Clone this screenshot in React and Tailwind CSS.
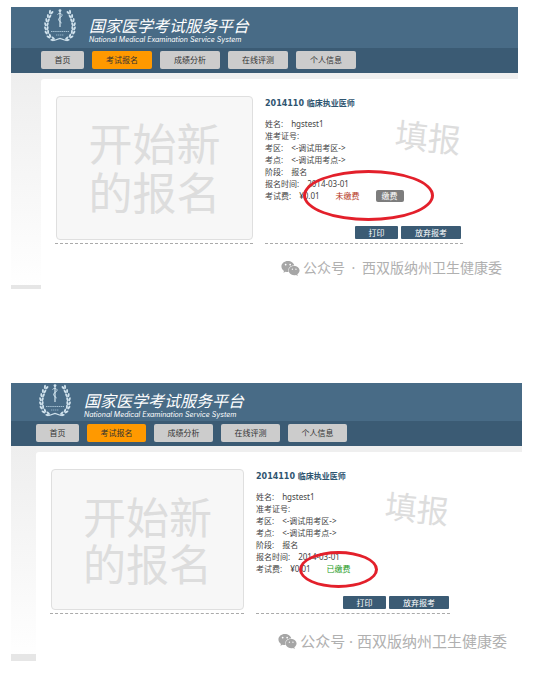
import React from 'react';
import clsx from 'clsx';
import { FaWeixin } from 'react-icons/fa';

const NAV_ITEMS = ['首页', '考试报名', '成绩分析', '在线评测', '个人信息'];

const DETAILS = [
    { label: '姓名:', value: 'hgstest1' },
    { label: '准考证号:', value: '' },
    { label: '考区:', value: '<-调试用考区->' },
    { label: '考点:', value: '<-调试用考点->' },
    { label: '阶段:', value: '报名' },
    { label: '报名时间:', value: '2014-03-01' },
];

// leaf positions on the right half of the wreath, mirrored for the left
const LEAVES = [
    [25, 3, -25],
    [27, 7, -18],
    [28.5, 11, -10],
    [29.5, 15, 0],
    [29.5, 19, 8],
    [29, 23, 20],
    [27, 27, 40],
    [23.5, 30, 65],
];

const Branch = () => (
    <g>
        {LEAVES.map(([x, y, angle]) => (
            <g key={y} transform={`translate(${x} ${y}) rotate(${angle})`}>
                <ellipse cx="-1.1" cy="0" rx="1" ry="2.1" transform="rotate(-18)" />
                <ellipse cx="1.1" cy="0" rx="1" ry="2.1" transform="rotate(18)" />
            </g>
        ))}
    </g>
);

const Emblem = () => (
    <svg viewBox="0 0 32 33" className="h-[33px] w-8 shrink-0" fill="#cfe1ec" aria-hidden="true">
        <Branch />
        <g transform="translate(32 0) scale(-1 1)">
            <Branch />
        </g>
        <path d="M10 31.5L16 29.5L22 31.5" fill="none" stroke="#cfe1ec" strokeWidth="1.2" />
        {/* staff with snake */}
        <circle cx="16" cy="1.6" r="1.4" />
        <path d="M16 2V18" stroke="#d5e6f0" strokeWidth="1.2" />
        <path
            d="M13.5 5.5C15 3.5 18.5 4.5 18 6.5C17.5 8.5 14.5 8.5 14.5 10.5C14.5 12.5 17.5 12.5 17.3 14.3"
            fill="none"
            stroke="#d5e6f0"
            strokeWidth=".9"
        />
        <path d="M7 22.5H25" stroke="#a3bed0" strokeWidth="1.2" strokeDasharray="1.5 .6" />
        <path d="M12 26H20" stroke="#8fafc4" strokeWidth="1" strokeDasharray="1.3 .6" />
    </svg>
);

/**
 * One view of the registration platform.
 * Props:
 *   paid    — fee has been paid, hides the pay button
 *   compact — slightly tighter layout
 */
const ExamScreen = ({ paid, compact }) => {
    return (
        <section className={compact ? 'mr-[11px]' : 'mr-[15px]'}>
            <header
                className={clsx(
                    'flex items-start gap-[13px] bg-[#486b86]',
                    compact ? 'h-[38px] pl-7 pt-px' : 'h-[41px] pl-[33px] pt-[2px]'
                )}
            >
                <Emblem />
                <div className="pt-[6px] italic text-white">
                    <h1 className="whitespace-nowrap text-[16px] leading-[22px]">国家医学考试服务平台</h1>
                    <p className="whitespace-nowrap font-['Inter',sans-serif] text-[7px] leading-[5px]">
                        National Medical Examination Service System
                    </p>
                </div>
            </header>

            <nav
                className={clsx(
                    'flex h-[25px] items-start gap-2 bg-[#3b5b74] pt-[3px]',
                    compact ? 'pl-[25px]' : 'pl-[30px]'
                )}
            >
                {NAV_ITEMS.map((item, i) => (
                    <button
                        key={item}
                        type="button"
                        className={clsx(
                            'h-[18px] rounded-[2px] text-[8px] leading-[18px] text-[#333]',
                            i === 0 ? 'w-[43px]' : compact ? 'w-[59px]' : 'w-[60px]',
                            i === 1 ? 'bg-[#ff9900]' : 'bg-[#cccccc]'
                        )}
                    >
                        {item}
                    </button>
                ))}
            </nav>

            <div className="flex">
                <aside
                    className={clsx(
                        'flex shrink-0 flex-col bg-linear-to-b from-[#eeeeee] to-white',
                        compact ? 'w-[25px]' : 'w-[30px]'
                    )}
                >
                    <div className={clsx('mt-auto bg-[#e6e6e6]', compact ? 'h-[7px]' : 'h-1')} />
                </aside>

                <div className="min-w-0 grow bg-[#efefef] pt-[6px]">
                    <div
                        className={clsx(
                            'rounded-tl-[3px] bg-white pl-[14px] pt-[17px]',
                            compact ? 'pb-[10px]' : 'pb-[11px]'
                        )}
                    >
                        <div className="flex gap-3">
                            <div
                                className={clsx(
                                    'shrink-0 border-b border-dashed border-[#aaa] pb-[3px]',
                                    compact ? 'w-[194px]' : 'w-[198px]'
                                )}
                            >
                                <button
                                    type="button"
                                    className={clsx(
                                        'ml-px block rounded-[4px] border border-[#dfdfdf] bg-[#f7f7f7] pt-[2px] text-[#dddddd]',
                                        compact
                                            ? 'h-[141px] w-[193px] text-[43px] leading-[47px]'
                                            : 'h-[144px] w-[197px] text-[44px] leading-[49px]'
                                    )}
                                >
                                    开始新
                                    <br />
                                    的报名
                                </button>
                            </div>

                            <div
                                className={clsx(
                                    'relative flex shrink-0 flex-col border-b border-dashed border-[#aaa] pb-1 pt-[2px] text-[8px] leading-[12px] text-[#444]',
                                    compact ? 'w-[194px]' : 'w-[198px]'
                                )}
                            >
                                <h2 className="mb-2 font-['DejaVu_Sans','Noto_Sans_CJK_SC',sans-serif] font-bold text-[#2f5570]">
                                    2014110 临床执业医师
                                </h2>
                                <dl>
                                    {DETAILS.map(({ label, value }) => (
                                        <div key={label} className="flex gap-2">
                                            <dt>{label}</dt>
                                            <dd>{value}</dd>
                                        </div>
                                    ))}
                                    <div className="relative flex gap-2">
                                        <dt>考试费:</dt>
                                        <dd className="flex items-center gap-4">
                                            <span>¥0.01</span>
                                            {paid ? (
                                                <span className="text-[#1c9a1c]">已缴费</span>
                                            ) : (
                                                <>
                                                    <span className="text-[#b5371b]">未缴费</span>
                                                    <button
                                                        type="button"
                                                        className="h-3 w-7 rounded-[2px] bg-[#7d7d7d] leading-[12px] text-white"
                                                    >
                                                        缴费
                                                    </button>
                                                </>
                                            )}
                                        </dd>
                                        {/* hand-drawn marker round the fee */}
                                        <span
                                            className={clsx(
                                                'pointer-events-none absolute rounded-[50%] border-[3px] border-[#e3202b]',
                                                paid
                                                    ? '-top-3 left-[43px] h-[37px] w-[79px]'
                                                    : '-top-5 left-[38px] h-[51px] w-[131px]'
                                            )}
                                        />
                                    </div>
                                </dl>

                                <span
                                    className={clsx(
                                        'pointer-events-none absolute top-5 rotate-6 text-[#dddddd]',
                                        compact
                                            ? 'right-px text-[32px] leading-[40px]'
                                            : 'right-[2px] text-[33px] leading-[44px]'
                                    )}
                                >
                                    填报
                                </span>

                                <div
                                    className={clsx(
                                        'mt-auto flex justify-end gap-[3px] text-white',
                                        compact ? 'pr-px' : 'pr-[2px]'
                                    )}
                                >
                                    <button type="button" className="h-[13px] w-[43px] rounded-[1px] bg-[#3b5b74] leading-[13px]">
                                        打印
                                    </button>
                                    <button type="button" className="h-[13px] w-[60px] rounded-[1px] bg-[#3b5b74] leading-[13px]">
                                        放弃报考
                                    </button>
                                </div>
                            </div>
                        </div>

                        {/* account signature */}
                        <p
                            className={clsx(
                                'flex items-center justify-end gap-[3px] whitespace-nowrap leading-[20px] text-[#b0b0b0]',
                                compact ? 'mt-[17px] pr-[15px] text-[15px]' : 'mt-[14px] pr-4 text-[14px]'
                            )}
                        >
                            <FaWeixin className="text-[19px] text-[#a6a6a6]" />
                            <span>
                                公众号<span className={compact ? '' : 'px-[3px]'}> · </span>西双版纳州卫生健康委
                            </span>
                        </p>
                    </div>
                </div>
            </div>
        </section>
    );
};

const App = () => {
    return (
        <main
            lang="zh-CN"
            className="flex min-h-screen flex-col gap-[94px] bg-white pb-5 pl-[11px] pt-[7px] font-['Noto_Sans','Noto_Sans_CJK_SC',sans-serif]"
        >
            <ExamScreen />
            <ExamScreen paid compact />
        </main>
    );
};

export default App;
